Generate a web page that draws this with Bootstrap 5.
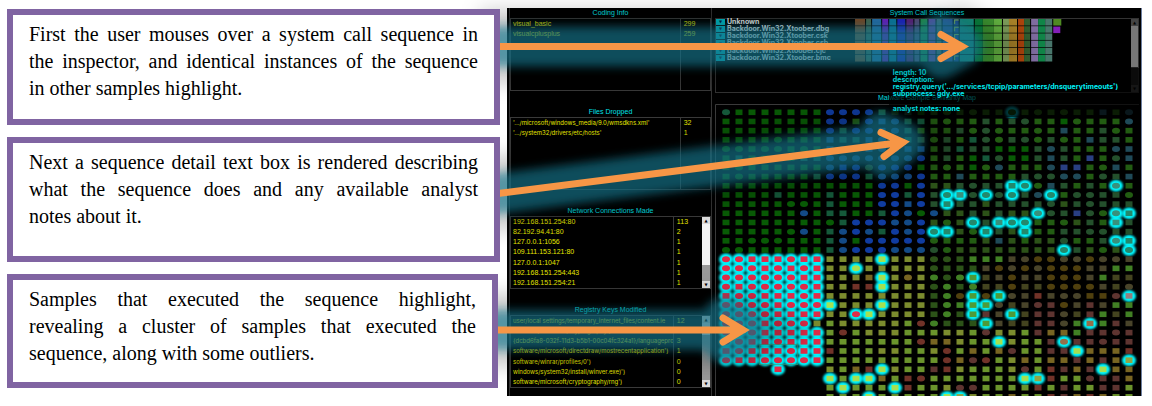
<!DOCTYPE html>
<html lang="en">
<head>
<meta charset="utf-8">
<meta name="viewport" content="width=device-width, initial-scale=1">
<title>Malware sample similarity inspector</title>
<link href="https://cdn.jsdelivr.net/npm/bootstrap@5.3.0/dist/css/bootstrap.min.css" rel="stylesheet">
<style>
  body { background: #fff; font-family: "Liberation Sans", Arial, sans-serif; }
  .walkthrough { display: grid; grid-template-columns: 493fr 635fr; column-gap: 7px; padding: 8px 10px 10px 7px; overflow: hidden; }
  .notes { display: grid; grid-template-rows: 116fr 124fr 114fr; row-gap: 12px; padding: 1px 0 8px; z-index: 2; }
  .note { border: 6px solid #8064a2; background: #fff; padding: 6px 16px; color: #000;
          font: 20px/27px "Liberation Serif", "Times New Roman", serif; text-align: justify; }
  .note:last-child { margin-right: 2px; }
  .dash { display: grid; grid-template-columns: 203fr 424fr; column-gap: 3px; padding: 0 2px; background: #000;
          border-right: 1px solid #6d7fa0; font-size: 7px; line-height: 10px; }
  .dash h2 { font-size: 7px; line-height: 10px; margin: 0; text-align: center; color: #00e0e8; }
  .facts { border-left: 1px solid #333; border-right: 1px solid #333; }
  .pane { height: 73px; border: 1px solid #3a3a3a; }
  .pane table { width: 100%; table-layout: fixed; color: #e6e600; }
  .pane table.paths td:first-child { font-family: Inter, "Liberation Sans", sans-serif; font-size: 6px; }
  .pane table.filled { height: 71px; }
  .pane td { padding: 0 0 0 2px; white-space: nowrap; overflow: hidden; }
  .pane td.rule-end { padding-left: 3px; }
  .rule-end { width: 15%; border-left: 1px solid #3a3a3a; }
  .bar { width: 8px; background: #9a9a9a; }
  .bar i { display: block; height: 7px; font: 4px/7px "DejaVu Sans", sans-serif; text-align: center; background: #ddd; color: #000; }
  .bar b { display: block; background: #f4f4f4; }
  .bar-dark { width: 7px; background: #222; }
  .bar-dark i { background: #444; color: #000; }
  .bar-dark b { background: #777; }
  .seq { height: 75px; border: 1px solid #333; }
  .families { width: 33%; display: grid; grid-template-rows: repeat(6, 1fr); height: 43px; color: #fff; font-weight: 700; line-height: 5px; font-family: Inter, sans-serif; }
  .families button { width: 9px; padding: 0; border: 0; background: #00c4d0; color: #024; font: 4px/6px "DejaVu Sans", sans-serif; margin: 0 2px 1px 0; }
  .calls { min-width: 0; }
  .tip { left: 41%; right: 0; top: 60px; height: 49px; padding: 1px 4px; background: rgba(0,0,0,.68); color: #00f0f6; font-family: Inter, sans-serif; font-weight: 700; line-height: 7px; white-space: nowrap; }
  .maptitle { height: 11px; }
  .arrows { z-index: 1; pointer-events: none; }
</style>
</head>
<body>
<main class="walkthrough position-relative">
  <section class="notes">
    <p class="note mb-0">First the user mouses over a system call sequence in the&nbsp;inspector, and identical instances of the sequence in&nbsp;other samples highlight.</p>
    <p class="note mb-0">Next a sequence detail text box is rendered describing what the sequence does and any available analyst notes&nbsp;about&nbsp;it.</p>
    <p class="note mb-0">Samples that executed the sequence highlight, revealing a cluster of samples that executed the sequence, along with some outliers.</p>
  </section>

  <section class="dash">
    <div class="facts d-flex flex-column">
      <h2>Coding Info</h2>
      <div class="pane d-flex mb-3">
        <table class="h-100"><tbody class="align-top">
          <tr><td>visual_basic</td><td class="rule-end">299</td></tr>
          <tr style="height:61px"><td>visualcplusplus</td><td class="rule-end">259</td></tr>
        </tbody></table>
      </div>
      <h2>Files Dropped</h2>
      <div class="pane d-flex mb-3">
        <table class="paths h-100"><tbody class="align-top">
          <tr><td>'.../microsoft/windows_media/9.0/wmsdkns.xml'</td><td class="rule-end">32</td></tr>
          <tr style="height:61px"><td>'.../system32/drivers/etc/hosts'</td><td class="rule-end">1</td></tr>
        </tbody></table>
      </div>
      <h2>Network Connections Made</h2>
      <div class="pane d-flex mb-3">
        <table class="filled"><tbody>
          <tr><td>192.168.151.254:80</td><td class="rule-end">113</td></tr>
          <tr><td>82.192.94.41:80</td><td class="rule-end">2</td></tr>
          <tr><td>127.0.0.1:1056</td><td class="rule-end">1</td></tr>
          <tr><td>109.111.153.121:80</td><td class="rule-end">1</td></tr>
          <tr><td>127.0.0.1:1047</td><td class="rule-end">1</td></tr>
          <tr><td>192.168.151.254:443</td><td class="rule-end">1</td></tr>
          <tr><td>192.168.151.254:21</td><td class="rule-end">1</td></tr>
        </tbody></table>
        <div class="bar d-flex flex-column flex-shrink-0" aria-hidden="true"><i>▲</i><b style="height:41px"></b><i class="mt-auto">▼</i></div>
      </div>
      <h2>Registry Keys Modified</h2>
      <div class="pane d-flex">
        <table class="paths filled"><tbody>
          <tr><td>user/local settings/temporary_internet_files/content.ie</td><td class="rule-end">12</td></tr>
          <tr><td>software/microsoft/cryptography')</td><td class="rule-end">3</td></tr>
          <tr><td>{dcbd6fa8-032f-11d3-b5b1-00c04fc324a1}/languageprof</td><td class="rule-end">3</td></tr>
          <tr><td>software/microsoft/directdraw/mostrecentapplication')</td><td class="rule-end">1</td></tr>
          <tr><td>software/winrar/profiles/0')</td><td class="rule-end">0</td></tr>
          <tr><td>windows/system32/install/winver.exe)')</td><td class="rule-end">0</td></tr>
          <tr><td>software/microsoft/cryptography/rng')</td><td class="rule-end">0</td></tr>
        </tbody></table>
        <div class="bar d-flex flex-column flex-shrink-0" aria-hidden="true"><i>▲</i><b style="height:12px"></b><i class="mt-auto">▼</i></div>
      </div>
    </div>

    <div class="position-relative">
      <h2>System Call Sequences</h2>
      <div class="seq d-flex">
        <div class="families flex-shrink-0">
          <div class="d-flex"><button aria-label="Expand Unknown">▼</button><span>Unknown</span></div>
          <div class="d-flex"><button aria-label="Expand dbg">▼</button><span>Backdoor.Win32.Xtoober.dbg</span></div>
          <div class="d-flex"><button aria-label="Expand csk">▼</button><span>Backdoor.Win32.Xtoober.csk</span></div>
          <div class="d-flex"><button aria-label="Expand csb">▼</button><span>Backdoor.Win32.Xtoober.csb</span></div>
          <div class="d-flex"><button aria-label="Expand cjc">▼</button><span>Backdoor.Win32.Xtoober.cjc</span></div>
          <div class="d-flex"><button aria-label="Expand bmc">▼</button><span>Backdoor.Win32.Xtoober.bmc</span></div>
        </div>
        <div class="calls flex-grow-1"><svg id="calls" class="d-block w-100" viewBox="0 0 274 43" aria-hidden="true"></svg></div>
        <div class="bar bar-dark d-flex flex-column flex-shrink-0" aria-hidden="true"><i>▲</i><b style="height:41px"></b><i class="mt-auto">▼</i></div>
      </div>
      <h2 class="maptitle">Malware Sample Similarity Map</h2>
      <svg id="map" class="d-block w-100" viewBox="0 0 424 292" role="img" aria-label="Grid of malware samples">
        <defs><filter id="halo" x="-80%" y="-80%" width="260%" height="260%"><feGaussianBlur stdDeviation="1"/></filter></defs>
      </svg>
      <div class="tip position-absolute" role="tooltip">
        <div>length: 10</div><div>description:</div>
        <div>registry.query('.../services/tcpip/parameters/dnsquerytimeouts')</div>
        <div>subprocess: gdy.exe</div><div class="mt-2">analyst notes: none</div>
      </div>
    </div>
  </section>

  <svg class="arrows position-absolute top-0 start-0 w-100 h-100" viewBox="0 0 1152 406" preserveAspectRatio="none" fill="none" aria-hidden="true">
    <defs>
      <filter id="glow" filterUnits="userSpaceOnUse" x="300" y="-60" width="852" height="520"><feGaussianBlur stdDeviation="5"/></filter>
      <filter id="shade" filterUnits="userSpaceOnUse" x="300" y="-60" width="852" height="520"><feGaussianBlur stdDeviation="10"/></filter>
      <g id="paths">
        <path d="M480 46.5H962M941 34.5L962 46.5L941 58.5"/>
        <path d="M480 195.8L903 142.3M881 132.5L903 142.3L884 156.5"/>
        <path d="M480 330H743M723 318L743 330L723 342"/>
      </g>
    </defs>
    <use href="#paths" stroke="#000" stroke-opacity=".22" stroke-width="72" filter="url(#shade)"/>
    <use href="#paths" stroke="#127991" stroke-width="40" stroke-linecap="round" stroke-linejoin="round" filter="url(#glow)" opacity=".64"/>
    <use href="#paths" stroke="#f79646" stroke-width="7" stroke-linecap="round"/>
  </svg>
</main>

<script src="https://cdn.jsdelivr.net/npm/bootstrap@5.3.0/dist/js/bootstrap.bundle.min.js"></script>
<script>
  const NS = 'http://www.w3.org/2000/svg';
  function add(parent, tag, attrs) {
    const e = document.createElementNS(NS, tag);
    for (const k in attrs) e.setAttribute(k, attrs[k]);
    parent.appendChild(e);
  }

  // Call sequence strip: [x, width, colour] for each call, six samples deep
  const calls = document.getElementById('calls');
  const strip = [[0,10,'#87532c'],[11,5,'#4e755c'],[17,9,'#2c7dc0'],[27,6,'#7a22dd'],[34,7,'#0e88b4'],[42,8,'#2424dc'],
    [51,7,'#6b2188'],[59,5,'#625488'],[65,7,'#27a052'],[73,7,'#8542c0'],[81,5,'#60727c'],[87,10,'#3b49ad'],[98,5,'#253a9a'],
    [104,14,'#1a9a86'],[119,8,'#0b8840'],[127,11,'#3f9832'],[138,8,'#66b843'],[147,6,'#80a05c'],[153,8,'#aa8328'],
    [162,6,'#ae440c'],[168,6,'#335f31'],[175,7,'#806ca0'],[182,7,'#108548'],[189,7,'#48776c']];
  for (let r = 0; r < 6; r++) {
    for (const [x, w, c] of strip) add(calls, 'rect', { x, y: r * 7.15, width: w, height: 6.5, fill: c });
    add(calls, 'path', { d: `M99 ${r * 7.15 + 5}v-4h4`, stroke: '#b8d838', fill: 'none' });
  }
  add(calls, 'rect', { x: 197, y: 0, width: 8, height: 6.5, fill: '#4f8a24' });
  add(calls, 'rect', { x: 197, y: 7.5, width: 7, height: 6.5, fill: '#8320b8' });

  // One letter per sample; a capital letter is a round mark
  const colours = { g:'#085b05', t:'#15593a', b:'#103ca0', c:'#134a86', d:'#225c12', e:'#24502c', k:'#1f4a58', n:'#293f82',
    o:'#7c8c2e', p:'#6b942c', m:'#786522', r:'#713228', w:'#5e3430', h:'#2c5218', j:'#418024', s:'#44441f', y:'#50400e', x:'#49442a', q:'#e02c48' };
  const samples = [
    'TgggggggBBBBtdegdDdDddgdDdDddkdK',
    'ggggggggBBdBcCttdDddedeEddgDdddK',
    'ggggggggBtBBcCtdddeDEDddDdkddeDd',
    'ggggGgggcttcCCteDedtEDeEDeDdkeed',
    'GGgGGgGgcCCcCCccdeteegggeKedddKk',
    'gtggtgttCCCCCCCBdedgtEggekedndEk',
    'gGggggggCbBEBBBgdDdgDKdddKnndDkd',
    'gGgggggtBBBtCCCBddkddddeEEKKdEek',
    'ggggggggggggBBgBhheEeeheDkededed',
    'ggggtgggtgggBBtBeKeEeEeeKEdEEeeD',
    'gggggGGgtgggBBcBeeeeheeeeEheEeee',
    'ggggggCgttggtBCGChhehehheEenEDee',
    'ggggggggGtBBBCCBhDhhedeeddDhedee',
    'gggggGCgtCBCtBCBEehDEehEddeeEEee',
    'ggGGGgggtCgBBBBBDdddhkhdhhEddeDd',
    'GGggggggtCBBBCCCEDhhhhhhhhEehDhE',
    'QQqqqQqqooooooooHHhjjjxXYYXXYXXx',
    'QQQqQqQqooOoooooHhhhxYXYXYYYxxjj',
    'QQQQQQqqooomooMoJHJjsxYxxYYYxjss',
    'QqQQQQQqoorrooooHJhJssYssYYYYxsX',
    'qQQqqqQqoooooooohJYjYjXxrxXXyyWj',
    'QQQQqQQQoooooooohJjjjXsxWwYxwxjj',
    'QQQQqqqqooQooooohJhjwxjswwXswjsj',
    'QQQqQQQopooooopRJhhhjxsswwXjmjwx',
    'QQQqqqqqpRpooopppoopWoopwmmjwwWw',
    'QQqqQqqqpppppppRmmopppoppwWwwWww',
    'qQqqqQqqrpppooppoRpmpmWppwwjmmmr',
    'QqqQQQQqpppppppppRmWRpompmmwmwmr',
    '....q...opmrooppwropppoWprwmwpmm',
    '........ppppmprRpppppppporppWwwm',
    '........pppppprppoWWpppprpwppwwp',
    '........ppppppppppooppmpprwmrmpp'
  ];
  const lit = { 0:[22], 8:[22,23,30], 9:[17,18,20,22,25], 10:[17], 11:[24,30,31], 12:[19,21,22,23,30], 13:[16,17,20,23],
    14:[30,31], 15:[26,31], 16:[12], 17:[10], 18:[12,19], 19:[12], 20:[19,21,31], 21:[8,12,19,20], 22:[10,11,19,22],
    23:[20,28], 25:[21,26], 26:[27], 27:[31], 28:[4,12,29], 29:[8,10,11,23,24], 30:[9,13], 31:[11,17,18] };
  const map = document.getElementById('map');
  add(map, 'path', { d: 'M.5 292V.5H424', stroke: '#3a3a3a', fill: 'none' });
  const isLit = (r, c) => (lit[r] || []).includes(c) || (r >= 16 && r < 28 && c < 8 && !(r === 23 && c === 7));
  const at = (r, c) => [11 + 13 * c, 8.3 + 9.18 * r];
  for (let r = 0; r < 32; r++) for (let c = 0; c < 32; c++) if (isLit(r, c)) {
    const [x, y] = at(r, c);
    add(map, 'ellipse', { cx: x, cy: y, rx: 7, ry: 6, fill: r ? '#00f8ff' : '#00a8b4', filter: 'url(#halo)' });
  }
  samples.forEach((row, r) => [...row].forEach((ch, c) => {
    if (ch === '.') return;
    const [x, y] = at(r, c), on = isLit(r, c);
    let fill = colours[ch.toLowerCase()], round = ch !== ch.toLowerCase();
    if (on && ch.toLowerCase() !== 'q') {
      fill = r < 16 ? (c % 3 ? '#24886c' : '#39907c') : (c < 16 || r > 24 ? '#a5e052' : '#4e9a38');
      if (r === 31 && c === 18 || r === 29 && c === 24 || r === 27) fill = '#92a447';
      if (r === 0) fill = '#0f4a10';
      if (r === 23 && c === 28 || r === 25 && c === 26) fill = '#93704a';
      if (r === 20 && c === 31) fill = '#938080';
      if (r < 16) round = !((c + r) % 3 === 0);
    }
    if (round) add(map, 'ellipse', { cx: x, cy: y, rx: 4, ry: 3, fill });
    else add(map, 'rect', { x: x - 3.5, y: y - 2.8, width: 7, height: 5.6, fill });
  }));
  add(map, 'rect', { x: 44.5, y: 240.5, width: 38, height: 20, fill: 'none', stroke: '#3a9a70', 'stroke-opacity': .6 });
</script>
</body>
</html>
